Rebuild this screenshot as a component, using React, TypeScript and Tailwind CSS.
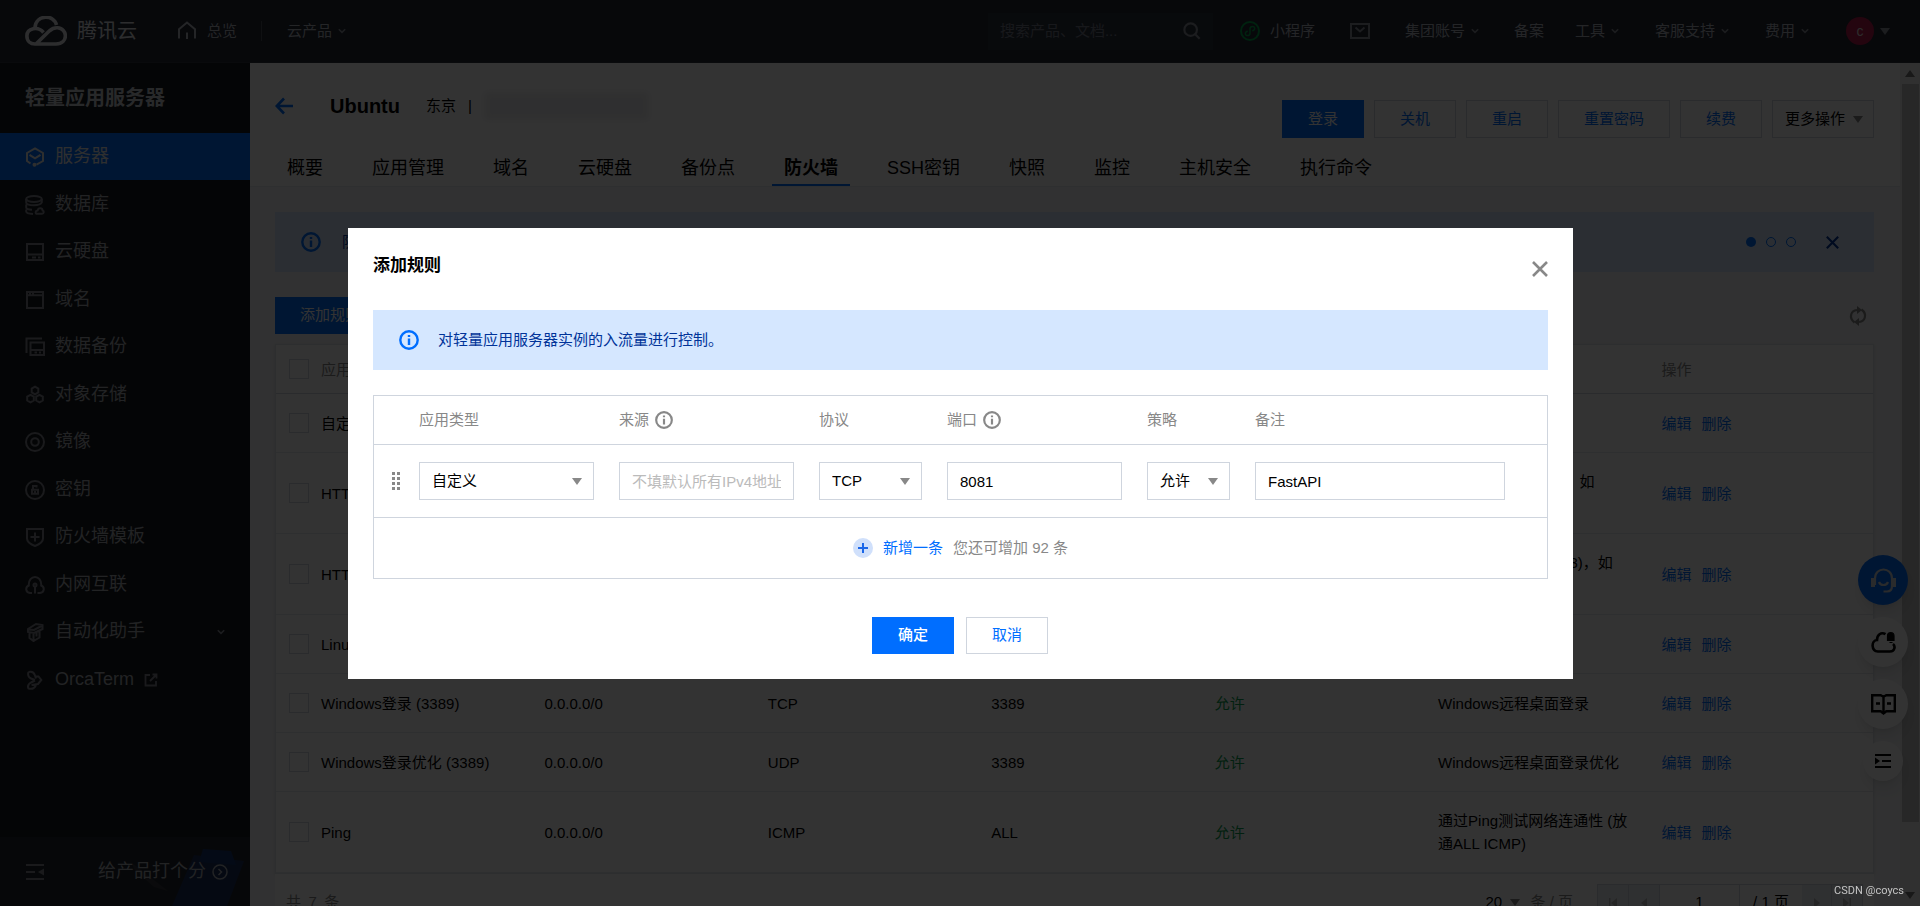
import { useState } from "react";
import type { ReactNode } from "react";

interface FirewallRule {
  name: string;
  source: string;
  protocol: string;
  port: string;
  remark: string;
}

interface IconProps {
  children: ReactNode;
  className?: string;
  size?: number;
  box?: number;
  stroke?: number;
}

const RULES: FirewallRule[] = [
  { name: "自定义", source: "0.0.0.0/0", protocol: "TCP", port: "8080", remark: "-" },
  { name: "HTTP (80)", source: "0.0.0.0/0", protocol: "TCP", port: "80", remark: "Web服务HTTP(80)，如 Apache、Nginx" },
  { name: "HTTPS (443)", source: "0.0.0.0/0", protocol: "TCP", port: "443", remark: "Web服务HTTPS(443)，如 Apache、Nginx" },
  { name: "Linux登录 (22)", source: "0.0.0.0/0", protocol: "TCP", port: "22", remark: "Linux SSH登录" },
  { name: "Windows登录 (3389)", source: "0.0.0.0/0", protocol: "TCP", port: "3389", remark: "Windows远程桌面登录" },
  { name: "Windows登录优化 (3389)", source: "0.0.0.0/0", protocol: "UDP", port: "3389", remark: "Windows远程桌面登录优化" },
  { name: "Ping", source: "0.0.0.0/0", protocol: "ICMP", port: "ALL", remark: "通过Ping测试网络连通性 (放通ALL ICMP)" },
];

const TABS = ["概要", "应用管理", "域名", "云硬盘", "备份点", "防火墙", "SSH密钥", "快照", "监控", "主机安全", "执行命令"];

function Icon({ children, className = "", size = 20, box = 20, stroke = 2 }: IconProps) {
  return (
    <svg
      width={size}
      height={size}
      viewBox={`0 0 ${box} ${box}`}
      fill="none"
      stroke="currentColor"
      strokeWidth={stroke}
      className={`shrink-0 ${className}`}
      aria-hidden="true"
    >
      {children}
    </svg>
  );
}

function InfoIcon({ size = 20, className = "" }: { size?: number; className?: string }) {
  return (
    <Icon size={size} stroke={2.4} className={className}>
      <circle cx="10" cy="10" r="8.7" />
      <path d="M10 8.5V15M10 5v2" />
    </Icon>
  );
}

function CloseIcon({ size, className = "" }: { size: number; className?: string }) {
  return (
    <Icon size={size} box={16} stroke={2.6} className={className}>
      <path d="M1 1l14 14M15 1L1 15" />
    </Icon>
  );
}

function Chevron({ className = "" }: { className?: string }) {
  return (
    <Icon size={8} box={8} stroke={1.6} className={`text-[#8a8e97] ${className}`}>
      <path d="M.8 2.2L4 5.4l3.2-3.2" />
    </Icon>
  );
}

function Triangle({ className = "" }: { className?: string }) {
  return (
    <svg width="10" height="7" viewBox="0 0 10 7" fill="currentColor" className={`shrink-0 ${className}`} aria-hidden="true">
      <path d="M0 0h10L5 7z" />
    </svg>
  );
}

const NAV: { label: string; icon: ReactNode; expandable?: boolean; external?: boolean }[] = [
  {
    label: "服务器",
    icon: (
      <>
        <path d="M5.5 16.5L2 14V6l8-4.6L18 6v8l-6.5 3.6" />
        <path d="M4.5 7.8L10 11.4l5.500-3.600" />
        <circle cx="9.5" cy="17.8" r="1" />
      </>
    ),
  },
  {
    label: "数据库",
    icon: (
      <>
        <ellipse cx="9" cy="4" rx="7.8" ry="3" />
        <path d="M1.2 4v3.4c0 1.6 3 2.8 7.8 2.8 3.5 0 7-1 7.8-2.8V4M1.2 9.5v3c0 1.4 2 2 5.8 2.3M1.2 14.5v2c0 1.4 2 2.2 6.8 2.4" />
        <path d="M12 18.8h5c2.2 0 2.2-3 .6-3.3-.3-3-4.3-3-5-.1-2.5.3-2.5 3.4-.6 3.4z" />
      </>
    ),
  },
  { label: "云硬盘", icon: <path d="M2 2h16v16H2zM2 12.5h16M7 15.5h4M13 15.5h2.5" /> },
  { label: "域名", icon: <path d="M2 2h16v16H2zM3 5.2h14M5 3v2M8 3v2" /> },
  { label: "数据备份", icon: <path d="M5.5 5.500H19V18H5.5zM5.5 13H19M9.5 15.5h2.5M14 15.5h2M1.5 16V1.5H17" /> },
  {
    label: "对象存储",
    icon: <path d="M10 1.7l3.3 1.9v3.8L10 9.3 6.7 7.4V3.6zM5.5 9.8l3.3 1.9v3.8l-3.3 1.9-3.300-1.9v-3.8zM14.5 9.8l3.3 1.9v3.8l-3.3 1.9-3.300-1.9v-3.8z" />,
  },
  {
    label: "镜像",
    icon: (
      <>
        <circle cx="10" cy="10" r="9" />
        <circle cx="10" cy="10" r="3.8" />
      </>
    ),
  },
  {
    label: "密钥",
    icon: (
      <>
        <circle cx="10" cy="10" r="9" />
        <path d="M7 9.8h6v4H7zM8 9.8V6h3.5v1.5M10 11v2" />
      </>
    ),
  },
  { label: "防火墙模板", icon: <path d="M2 2h16v9.5c0 3-4 6-8 7.5-4-1.5-8-4.500-8-7.500zM10 5.500v9M5.500 10h9" /> },
  {
    label: "内网互联",
    icon: (
      <>
        <path d="M7 18H5c-4.5-.5-5-6-1.200-7.500C3-1 17-1 16.200 10.500 20 12 19.500 17.500 15 18h-2.500" />
        <path d="M10 18.500V11" />
        <circle cx="10" cy="10" r="1.500" />
      </>
    ),
  },
  {
    label: "自动化助手",
    expandable: true,
    icon: <path d="M3 7l8-5 6.500 1V7L9 11 3 10zM4.500 11v5l4 3v-8M8.500 19l6-3.500V9M11.500 10.500v4M4 7.500l5 .5 7.500-4" />,
  },
  {
    label: "OrcaTerm",
    external: true,
    icon: <path d="M3.500 2C2.500 4.500 3.500 7.500 6 8.500l4 1.500M3.500 2c3.500-1 5.500.5 6.300 3l1.200 3.500M10.500 6.500l3 0 2.800 3.500-3.300 4-6.500 1M10 10.500l-4 2c-2.500 1.500-3.500 4-2.500 6 3.500 1 6 0 7.500-3.500" />,
  },
];

function TopBar() {
  return (
    <header className="flex h-[63px] shrink-0 items-center border-b border-[#30343f] bg-[#232835] pr-[30px] pl-[25px] text-[15px] text-[#b4b8c1]">
      <a href="#" className="flex items-center gap-[10px] text-[20px] text-[#dfe1e6]">
        <svg width="42" height="30" viewBox="0 0 42 30" fill="none" stroke="currentColor" strokeWidth="3.6" aria-hidden="true">
          <path d="M10 11.5C11-1.500 29-2 31.500 9" />
          <path d="M18.500 16.500C13 10 2 12 1.900 20c0 5 3.600 8 8.100 8h21c12.500 0 12-15.500 1.500-16.200-3.500-.2-6 1.200-8 3L11.500 27.500" />
        </svg>
        腾讯云
      </a>
      <a href="#" className="ml-10 flex items-center gap-[10px]">
        <Icon>
          <path d="M2 17.500V8.200L10 1.500l8 6.700v9.300M10 11.500V18" />
        </Icon>
        总览
      </a>
      <span className="mx-6 h-5 w-px bg-[#4a4f5c]" />
      <button className="ml-px flex items-center gap-[6px]">
        云产品
        <Chevron />
      </button>
      <div className="ml-auto flex h-[37px] w-[225px] items-center bg-[#2c323e] px-3">
        <input
          aria-label="搜索"
          placeholder="搜索产品、文档..."
          className="min-w-0 flex-1 bg-transparent outline-none placeholder:text-[#747b89]"
        />
        <Icon size={18} stroke={2.4} className="text-[#8a8f9a]">
          <circle cx="8.5" cy="8.5" r="7" />
          <path d="M13.500 13.500l5 5" />
        </Icon>
      </div>
      <a href="#" className="ml-[27px] flex items-center gap-[10px]">
        <Icon className="text-[#00a84a]">
          <circle cx="10" cy="10" r="9" />
          <path d="M7.800 10.200c-3.200.4-3.200 4.400-.4 4.400 1.600 0 2.600-1 2.600-2.400V7.800c0-1.400 1-2.400 2.600-2.400 2.800 0 2.800 4-.4 4.400" strokeWidth="1.5" />
        </Icon>
        小程序
      </a>
      <button aria-label="消息" className="ml-[35px] text-[#8a8f9a]">
        <Icon>
          <path d="M1 3h18v14H1zM5.500 6.500l4.500 4 4.500-4" />
        </Icon>
      </button>
      <button className="ml-[35px] flex items-center gap-[6px]">
        集团账号
        <Chevron />
      </button>
      <a href="#" className="ml-[35px]">备案</a>
      <button className="ml-[31px] flex items-center gap-[6px]">
        工具
        <Chevron />
      </button>
      <button className="ml-9 flex items-center gap-[6px]">
        客服支持
        <Chevron />
      </button>
      <button className="ml-9 flex items-center gap-[6px]">
        费用
        <Chevron />
      </button>
      <button className="ml-[37px] flex items-center gap-[6px]">
        <span className="flex size-7 items-center justify-center rounded-full bg-[#b5194a] text-[14px] text-[#dddddd]">c</span>
        <Triangle className="text-[#8a8f9a]" />
      </button>
    </header>
  );
}

function Sidebar() {
  return (
    <aside className="flex w-[250px] shrink-0 flex-col bg-[#171a1f] text-[18px] text-[#a9adb5]">
      <h1 className="flex h-[70px] items-center pl-[25px] text-[20px] font-bold text-[#c9ccd2]">轻量应用服务器</h1>
      <nav className="flex flex-col">
        {NAV.map((item, i) => (
          <a
            key={item.label}
            href="#"
            className={
              i === 0
                ? "flex h-[47px] items-center gap-[10px] bg-[#006eff] px-[25px] text-[#e6e8ec] odd:mb-px"
                : "flex h-[47px] items-center gap-[10px] px-[25px] odd:mb-px"
            }
          >
            <Icon className={i === 0 ? "" : "text-[#80848c]"}>{item.icon}</Icon>
            {item.label}
            {item.external && (
              <Icon size={14} box={14} stroke={1.8} className="text-[#80848c]">
                <path d="M6 2H1.500v10.500H12V8M8.500 1.500h4v4M12.500 1.500L6 8" />
              </Icon>
            )}
            {item.expandable && <Chevron className="ml-auto" />}
          </a>
        ))}
      </nav>
      <div className="relative mt-auto flex h-[69px] items-center overflow-hidden bg-[#22262f] pl-[26px]">
        <svg width="120" height="57" viewBox="0 0 120 57" className="absolute right-0 bottom-0" aria-hidden="true">
          <path d="M42 57L64 6l50 6L97 57z" fill="#1b2f5c" />
          <path d="M73 0l28 2 5 14-37-3z" fill="#16356f" />
          <path d="M2 14l36 28-14-4L4 20z" fill="#33363d" />
        </svg>
        <button aria-label="收起" className="relative">
          <Icon size={18} box={18} className="text-[#80848c]">
            <path d="M0 2h18M0 9h9M0 16h18" />
            <path d="M12 9l6-3.500v7z" fill="currentColor" stroke="none" />
          </Icon>
        </button>
        <a href="#" className="relative ml-auto flex items-center gap-[6px] pr-[22px]">
          给产品打个分
          <Icon size={16} box={16} stroke={1.5}>
            <circle cx="8" cy="8" r="7" />
            <path d="M6.500 5l3 3-3 3" />
          </Icon>
        </a>
      </div>
    </aside>
  );
}

function InstanceHeader() {
  return (
    <div className="border-b border-[#e5e8ed] bg-white pl-[25px]">
      <div className="flex h-[75px] items-end pr-[26px]">
        <div className="flex h-[64px] flex-1 items-center">
          <button aria-label="返回" className="text-[#006eff]">
            <Icon size={18} box={18} stroke={2.6}>
              <path d="M18 9H2M9 1.500L1.800 9 9 16.500" />
            </Icon>
          </button>
          <h2 className="ml-[37px] text-[20px] font-bold">Ubuntu</h2>
          <span className="ml-[26px] text-[15px]">东京</span>
          <span className="mx-3 text-[15px]">|</span>
          <span className="h-7 w-[165px] rounded bg-[#ececee] blur-[3px]" />
        </div>
        <div className="flex gap-[10px] text-[15px] text-[#006eff]">
          <button className="h-[38px] bg-[#006eff] px-[26px] text-white">登录</button>
          <button className="h-[38px] border border-[#cfd5de] px-[25px]">关机</button>
          <button className="h-[38px] border border-[#cfd5de] px-[25px]">重启</button>
          <button className="h-[38px] border border-[#cfd5de] px-[25px]">重置密码</button>
          <button className="h-[38px] border border-[#cfd5de] px-[25px]">续费</button>
          <button className="flex h-[38px] items-center gap-2 border border-[#cfd5de] pr-[10px] pl-3 text-black">
            更多操作
            <Triangle className="text-[#888888]" />
          </button>
        </div>
      </div>
      <div role="tablist" className="flex gap-[25px] pt-3 text-[18px]">
        {TABS.map((tab) => (
          <button
            key={tab}
            role="tab"
            aria-selected={tab === "防火墙"}
            className={
              tab === "防火墙"
                ? "h-9 border-b-2 border-[#006eff] px-3 pt-[2px] leading-[30px] font-bold"
                : "h-9 border-b-2 border-transparent px-3 pt-[2px] leading-[30px]"
            }
          >
            {tab}
          </button>
        ))}
      </div>
    </div>
  );
}

function RuleTable() {
  return (
    <table className="w-full table-fixed border-separate border-spacing-0 border border-[#dfe3e9] bg-white text-left text-[15px] leading-[23px] shadow-sm">
      <thead className="text-[#888888]">
        <tr>
          <th className="h-[49px] w-[33px] border-b border-[#cfd5de] pl-[13px]">
            <input type="checkbox" aria-label="全选" className="block size-5 appearance-none border border-[#cfd5de]" />
          </th>
          {["应用类型", "来源", "协议", "端口", "策略", "备注", "操作"].map((h) => (
            <th key={h} className="border-b border-[#cfd5de] px-3 font-normal">{h}</th>
          ))}
        </tr>
      </thead>
      <tbody>
        {RULES.map((rule) => (
          <tr key={rule.name} className="*:h-[59px] *:border-b *:border-[#e5e8ed] *:py-[17px]">
            <td className="pl-[13px]">
              <input type="checkbox" aria-label={rule.name} className="block size-5 appearance-none border border-[#cfd5de]" />
            </td>
            <td className="px-3">{rule.name}</td>
            <td className="px-3">{rule.source}</td>
            <td className="px-3">{rule.protocol}</td>
            <td className="px-3">{rule.port}</td>
            <td className="px-3 text-[#0a9f52]">允许</td>
            <td className="px-3">{rule.remark}</td>
            <td className="px-3 text-[#006eff]">
              <a href="#" className="mr-[10px]">编辑</a>
              <a href="#">删除</a>
            </td>
          </tr>
        ))}
      </tbody>
    </table>
  );
}

function Pager() {
  return (
    <div className="flex items-center bg-white px-[11px] py-[10px] text-[15px] text-[#888888]">
      <span>共&ensp;7&ensp;条</span>
      <label className="ml-auto flex items-center">
        <select className="appearance-none text-black">
          <option>20</option>
        </select>
        <Triangle className="mx-2" />
        <span className="ml-[2px]">条 / 页</span>
      </label>
      <div className="ml-6 flex h-[37px] items-stretch border border-[#cfd5de] bg-[#e9edf3] text-black">
        <button aria-label="首页" className="flex w-[31px] items-center justify-center border-r border-[#cfd5de] text-[#bbbbbb]">
          <svg width="8" height="10" viewBox="0 0 8 10" fill="currentColor"><path d="M0 0h1.500v10H0zM8 0v10L2 5z" /></svg>
        </button>
        <button aria-label="上一页" className="flex w-[30px] items-center justify-center text-[#bbbbbb]">
          <svg width="6" height="10" viewBox="0 0 6 10" fill="currentColor"><path d="M6 0v10L0 5z" /></svg>
        </button>
        <input aria-label="页码" defaultValue="1" className="w-[81px] border-x border-[#cfd5de] bg-white text-center" />
        <span className="flex w-[62px] items-center justify-center bg-white">/ 1 页</span>
        <button aria-label="下一页" className="flex w-[30px] items-center justify-center border-r border-[#cfd5de] text-[#bbbbbb]">
          <svg width="6" height="10" viewBox="0 0 6 10" fill="currentColor"><path d="M0 0v10l6-5z" /></svg>
        </button>
        <button aria-label="末页" className="flex w-[30px] items-center justify-center text-[#bbbbbb]">
          <svg width="8" height="10" viewBox="0 0 8 10" fill="currentColor"><path d="M6.500 0H8v10H6.500zM0 0v10l6-5z" /></svg>
        </button>
      </div>
    </div>
  );
}

function FloatingTools() {
  return (
    <div className="fixed right-3 bottom-[125px] flex flex-col items-center gap-3 text-black">
      <button aria-label="在线客服" className="flex size-[50px] items-center justify-center rounded-full bg-[#006eff] text-[#d0d4da] shadow-lg">
        <Icon size={25} box={25} stroke={2.2}>
          <path d="M4 17V10.500C4-1.500 21-1.500 21 10.500V18c0 3.500-2 5.500-5 5.500h-3.500M8 14c1.500 4 7.500 4 9 0" />
          <path d="M2 10v9M23.500 10v9" strokeWidth="4" />
        </Icon>
      </button>
      <button aria-label="云助手" className="flex size-[50px] items-center justify-center rounded-full bg-white shadow-lg">
        <Icon size={25} box={25} stroke={2.6}>
          <path d="M14.500 4.200C10 1.500 6 5 6 10c-6 .5-6 11 1 11.500h12c5 0 5.500-5.500 3-7.500" />
          <path d="M16.500 10.500V6c0-4.500 6.500-4.500 6.500 0v4.500zM18.500 12.500h3" fill="currentColor" strokeWidth="1.200" />
        </Icon>
      </button>
      <button aria-label="文档" className="flex size-[50px] items-center justify-center rounded-full bg-white shadow-lg">
        <Icon size={25} box={25} stroke={2.4}>
          <path d="M1.200 3.200h8.500l2.800 1.500 2.800-1.500h8.500v16h-8.500l-2.800 2.300-2.800-2.300H1.200zM12.500 5v16M5 11.500h4M16 11.500h4" />
        </Icon>
      </button>
      <button aria-label="收起工具栏" className="flex size-10 items-center justify-center rounded-full bg-white shadow-lg">
        <Icon size={16} box={16}>
          <path d="M0 2h16M7 8h9M0 14h16" />
          <path d="M0 4.500L5 8l-5 3.500z" fill="currentColor" stroke="none" />
        </Icon>
      </button>
    </div>
  );
}

function SelectBox({ label, options }: { label: string; options: string[] }) {
  return (
    <div className="relative">
      <select aria-label={label} className="h-[38px] w-full appearance-none border border-[#cfd5de] bg-white pr-7 pl-3">
        {options.map((o) => (
          <option key={o}>{o}</option>
        ))}
      </select>
      <Triangle className="pointer-events-none absolute top-4 right-3 text-[#888888]" />
    </div>
  );
}

function AddRuleDialog({ onClose }: { onClose: () => void }) {
  const [port, setPort] = useState("8081");
  const [remark, setRemark] = useState("FastAPI");

  return (
    <div className="fixed inset-0 flex items-center justify-center bg-black/80 pt-px pl-px">
      <section role="dialog" aria-label="添加规则" className="w-full max-w-[1225px] bg-white p-[25px] text-[15px] text-black">
        <div className="flex items-start justify-between">
          <h3 className="text-[17px] leading-[26px] font-bold">添加规则</h3>
          <button aria-label="关闭" onClick={onClose} className="pt-2 text-[#888888]">
            <CloseIcon size={16} />
          </button>
        </div>

        <div className="mt-[31px] flex h-[60px] items-center gap-[19px] bg-[#d5e7ff] px-[26px] text-[#003399]">
          <InfoIcon className="text-[#006eff]" />
          对轻量应用服务器实例的入流量进行控制。
        </div>

        <div className="mt-[25px] border border-[#cfd5de]">
          <table className="w-full table-fixed border-separate border-spacing-0 text-left">
            <thead className="text-[#888888]">
              <tr className="*:h-[49px] *:border-b *:border-[#cfd5de] *:font-normal">
                <th className="w-[33px]" />
                <th className="w-[200px] px-3">应用类型</th>
                <th className="w-[200px] px-3">
                  <span className="flex items-center gap-[6px]">来源 <InfoIcon size={18} /></span>
                </th>
                <th className="w-[128px] px-3">协议</th>
                <th className="w-[200px] px-3">
                  <span className="flex items-center gap-[6px]">端口 <InfoIcon size={18} /></span>
                </th>
                <th className="w-[108px] px-3">策略</th>
                <th className="px-3">备注</th>
              </tr>
            </thead>
            <tbody>
              <tr className="*:h-[73px] *:border-b *:border-[#cfd5de]">
                <td className="pl-[18px] text-[#888888]">
                  <svg width="8" height="18" viewBox="0 0 8 18" fill="currentColor" aria-hidden="true">
                    <path d="M0 0h3v3H0zM5 0h3v3H5zM0 5h3v3H0zM5 5h3v3H5zM0 10h3v3H0zM5 10h3v3H5zM0 15h3v3H0zM5 15h3v3H5z" />
                  </svg>
                </td>
                <td className="pr-[13px] pl-3"><SelectBox label="应用类型" options={["自定义", "HTTP (80)", "HTTPS (443)"]} /></td>
                <td className="pr-[13px] pl-3">
                  <input
                    aria-label="来源"
                    placeholder="不填默认所有IPv4地址"
                    className="block h-[38px] w-full border border-[#cfd5de] px-3 placeholder:text-[#bbbbbb]"
                  />
                </td>
                <td className="pr-[13px] pl-3"><SelectBox label="协议" options={["TCP", "UDP", "ICMP"]} /></td>
                <td className="pr-[13px] pl-3">
                  <input
                    aria-label="端口"
                    value={port}
                    onChange={(e) => setPort(e.target.value)}
                    className="block h-[38px] w-full border border-[#cfd5de] px-3"
                  />
                </td>
                <td className="pr-[13px] pl-3"><SelectBox label="策略" options={["允许", "拒绝"]} /></td>
                <td className="pr-[13px] pl-3">
                  <input
                    aria-label="备注"
                    value={remark}
                    onChange={(e) => setRemark(e.target.value)}
                    className="block h-[38px] w-[250px] border border-[#cfd5de] px-3"
                  />
                </td>
              </tr>
            </tbody>
          </table>
          <div className="flex h-[60px] items-center justify-center gap-[10px] text-[#888888]">
            <button className="flex items-center gap-[10px] text-[#006eff]">
              <Icon>
                <circle cx="10" cy="10" r="10" fill="#d0e0fb" stroke="none" />
                <path d="M10 5v10M5 10h10" stroke="#1a66e8" />
              </Icon>
              新增一条
            </button>
            您还可增加 92 条
          </div>
        </div>

        <div className="mt-[38px] flex justify-center gap-3 pr-px">
          <button className="h-[37px] w-[82px] bg-[#006eff] font-medium text-white">确定</button>
          <button onClick={onClose} className="h-[37px] w-[82px] border border-[#cfd5de] text-[#006eff]">取消</button>
        </div>
      </section>
    </div>
  );
}

export default function App() {
  const [open, setOpen] = useState(true);

  return (
    <div className="flex h-screen flex-col overflow-hidden font-['Liberation_Sans','Noto_Sans_CJK_SC',sans-serif] text-black">
      <TopBar />
      <div className="flex min-h-0 flex-1">
        <Sidebar />
        <main className="min-w-0 flex-1 overflow-hidden bg-[#f3f4f7]">
          <InstanceHeader />
          <div className="p-[25px] pr-[26px]">
            <div className="flex h-[60px] items-center bg-[#d5e7ff] px-[26px] text-[15px] text-[#003399]">
              <InfoIcon className="text-[#006eff]" />
              <span className="ml-[21px]">防火墙</span>
              <span className="ml-auto flex gap-[10px]">
                <span className="size-[10px] rounded-full bg-[#006eff]" />
                <span className="size-[10px] rounded-full border border-[#006eff]" />
                <span className="size-[10px] rounded-full border border-[#006eff]" />
              </span>
              <button aria-label="关闭提示" className="mr-[9px] ml-[30px]">
                <CloseIcon size={13} />
              </button>
            </div>
            <div className="mt-[25px] mb-[10px] flex items-center justify-between pr-[6px]">
              <button onClick={() => setOpen(true)} className="h-[37px] bg-[#006eff] px-[25px] text-[15px] text-white">
                添加规则
              </button>
              <button aria-label="刷新" className="text-[#888888]">
                <Icon stroke={2.2}>
                  <path d="M6.500 16.500C.5 12 2.500 4 10 4M13.500 3.500c6 4.500 4 12.500-3.500 12.500" />
                  <path d="M9 0l5 4-5 4zM11 12l-5 4 5 4z" fill="currentColor" stroke="none" />
                </Icon>
              </button>
            </div>
            <RuleTable />
            <Pager />
          </div>
        </main>
        <div className="flex w-5 shrink-0 flex-col items-center gap-[3px] bg-[#f1f1f1] py-[7px] text-[#777777]">
          <Triangle className="rotate-180" />
          <div className="mt-1 mb-auto h-[89%] w-[17px] bg-[#c1c1c1]" />
          <Triangle />
        </div>
      </div>
      <FloatingTools />
      {open && <AddRuleDialog onClose={() => setOpen(false)} />}
      <span className="fixed right-4 bottom-2 font-['Roboto',sans-serif] text-[11px] leading-[14px] text-[#c4c4c4]">CSDN @coycs</span>
    </div>
  );
}
